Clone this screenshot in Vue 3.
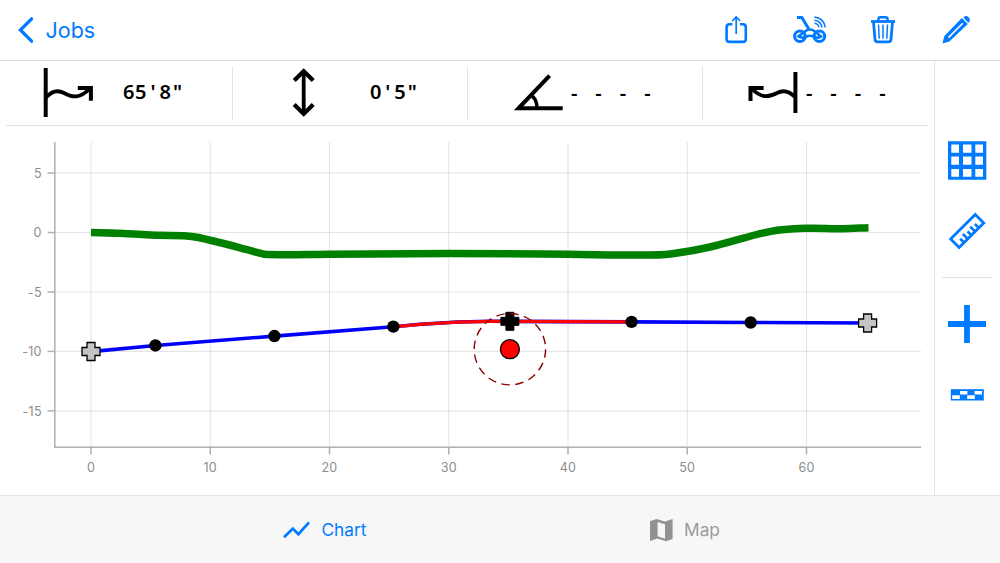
<script setup>
import { computed } from 'vue';

const xTicks = [0, 10, 20, 30, 40, 50, 60];
const yTicks = [5, 0, -5, -10, -15];

// feet to chart pixels
const sx = (v) => 91 + v * 11.925;
const sy = (v) => 106.5 - v * 11.89;

const ground = [
  [0, 0], [2.4, -0.06], [5.8, -0.24], [7.8, -0.27], [9, -0.42], [12.2, -1.2], [14, -1.7], [14.8, -1.86],
  [20, -1.83], [30, -1.76], [40, -1.83], [46, -1.9], [48.6, -1.8], [52, -1.2], [57, 0.1], [60, 0.36],
  [63, 0.32], [65.2, 0.4]
];

const rods = [
  { x: 5.4, y: -9.5 },
  { x: 15.38, y: -8.71 },
  { x: 25.35, y: -7.92 },
  { x: 45.33, y: -7.52 },
  { x: 55.32, y: -7.57 }
];

// smooth line through the survey points
const groundPath = computed(() => {
  const p = ground.map(([x, y]) => [sx(x), sy(y)]);
  let d = `M${p[0][0]} ${p[0][1]}`;
  for (let i = 0; i < p.length - 1; i++) {
    const a = p[i - 1] || p[i];
    const b = p[i];
    const c = p[i + 1];
    const e = p[i + 2] || c;
    const step = (c[0] - b[0]) / 3;
    const m1 = (c[1] - a[1]) / (c[0] - a[0]);
    const m2 = (e[1] - b[1]) / (e[0] - b[0]);
    d += ` C${b[0] + step} ${b[1] + m1 * step} ${c[0] - step} ${c[1] - m2 * step} ${c[0]} ${c[1]}`;
  }
  return d;
});

const cross = 'M-4 -9H4V-4H9V4H4V9H-4V4H-9V-4H-4Z';
</script>

<template>
  <div class="app">
    <header class="header">
      <div class="back">
        <svg width="18" height="28" viewBox="0 0 18 28">
          <path d="M14.6 2.8L3.4 14L14.6 25.2" fill="none" stroke="#007aff" stroke-width="3.3" stroke-linecap="round" stroke-linejoin="miter" />
        </svg>
        <span>Jobs</span>
      </div>
      <div class="actions">
        <!-- share -->
        <svg width="36" height="34" viewBox="718 13 36 34" class="line">
          <path d="M732.4 24.3H729.5Q726.6 24.3 726.6 27.2V39Q726.6 41.9 729.5 41.9H742.9Q745.8 41.9 745.8 39V27.2Q745.8 24.3 742.9 24.3H740" stroke-width="2.6" />
          <path d="M736.2 34V17.5M732.2 21L736.2 17L740.2 21" stroke-width="1.7" />
        </svg>
        <!-- locator -->
        <svg width="40" height="34" viewBox="790 13 40 34" class="line">
          <path d="M797 17.4H801.8L808.8 29" stroke-width="3" />
          <circle cx="799.9" cy="36.3" r="5.3" stroke-width="3" />
          <circle cx="819.4" cy="36.3" r="5.3" stroke-width="3" />
          <path d="M798.5 36.4Q803 33 805.6 31Q807.5 29.5 810 29.5Q812.7 29.5 814.5 31.3L821 36.4Q818 38.7 814 36.8Q810 34.8 806 36.8Q802 38.7 798.5 36.4Z" stroke-width="2.6" />
          <path d="M814.4 17.1A11 11 0 0 1 825.1 27.4M814.4 20.2A8 8 0 0 1 822 27.4M814.4 23.2A5 5 0 0 1 818.9 27.4" stroke-width="1.6" />
        </svg>
        <!-- delete -->
        <svg width="36" height="34" viewBox="866 13 36 34" class="line">
          <path d="M871 21.5H895" stroke-width="2.8" />
          <path d="M878.4 21V19.2Q878.4 17.3 880.4 17.3H885.6Q887.6 17.3 887.6 19.2V21" stroke-width="2.4" />
          <path d="M873.5 22L875 39.4Q875.2 41.9 877.6 41.9H888.4Q890.8 41.9 891 39.4L892.5 22" stroke-width="2.8" />
          <path d="M878.5 24.5L879.2 38.7M883 24.5V38.7M887.5 24.5L886.8 38.7" stroke-width="1.5" />
        </svg>
        <!-- edit -->
        <svg width="36" height="34" viewBox="938 13 36 34">
          <path d="M961.8 18.1L967.8 24.1L949.4 41.4L942.4 43.4L944.4 35.9Z" fill="#007aff" />
          <path d="M948.4 37.6L962.8 23.3" stroke="#fff" stroke-width="1.5" />
          <path d="M963.4 17.6L964.6 16.6Q966.5 15.2 968.6 17.2Q970.8 19.3 969.6 21.3L968.3 22.7Z" fill="#007aff" />
        </svg>
      </div>
    </header>

    <div class="main">
      <div class="content">
        <div class="readouts">
          <div class="readout">
            <svg class="glyph" width="56" height="58" viewBox="40 64 56 58">
              <path d="M45.7 68V117" stroke-width="4" />
              <path d="M46 97.5C53 89.5 59 90.3 64 93C73 98 80 98.5 90 88.5" stroke-width="3.8" />
              <path d="M77.8 87.9H90.9V100.8" stroke-width="4" />
            </svg>
            <div class="value first"><span v-for="(c, i) in '65\'8&quot;'" :key="i">{{ c }}</span></div>
          </div>
          <div class="readout">
            <svg class="glyph updown" width="40" height="58" viewBox="284 64 40 58">
              <path d="M303.7 71V114" stroke-width="3.8" />
              <path d="M294.2 80.6L303.7 71.3L313.2 80.6M294.2 104.4L303.7 113.9L313.2 104.4" stroke-width="4.2" />
            </svg>
            <div class="value second"><span v-for="(c, i) in '0\'5&quot;'" :key="i">{{ c }}</span></div>
          </div>
          <div class="readout">
            <svg class="glyph angle" width="52" height="58" viewBox="512 64 52 58">
              <path d="M549.6 75.6L518.5 108.3H562.7" stroke-width="4" />
              <path d="M530.5 95C535 97.5 537 102 537 108" stroke-width="3.6" />
            </svg>
            <div class="value dashes"><span v-for="(c, i) in '- - - -'" :key="i">{{ c }}</span></div>
          </div>
          <div class="readout">
            <svg class="glyph reverse" width="54" height="58" viewBox="746 64 54 58">
              <path d="M795.4 72V113" stroke-width="4" />
              <path d="M795 97C788 90 782 90.2 777 93C768 97.7 761 97.8 752 89" stroke-width="3.8" />
              <path d="M763.6 87.9H750.5V101" stroke-width="4" />
            </svg>
            <div class="value dashes last"><span v-for="(c, i) in '- - - -'" :key="i">{{ c }}</span></div>
          </div>
        </div>

        <svg class="chart" width="934" height="369" viewBox="0 0 934 369">
          <g stroke="#000" stroke-opacity="0.1" stroke-width="1.1">
            <line v-for="t in xTicks" :key="'gx' + t" :x1="sx(t)" :x2="sx(t)" y1="16" y2="321" />
            <line v-for="t in yTicks" :key="'gy' + t" x1="55" x2="921" :y1="sy(t)" :y2="sy(t)" />
          </g>
          <g stroke="#b0b0b0" stroke-width="1.5">
            <path d="M54.8 16V321.3H921" fill="none" />
            <line v-for="t in xTicks" :key="'tx' + t" :x1="sx(t)" :x2="sx(t)" y1="322" y2="328.5" />
            <line v-for="t in yTicks" :key="'ty' + t" x1="47.5" x2="54" :y1="sy(t)" :y2="sy(t)" />
          </g>
          <g class="ticks">
            <text v-for="t in xTicks" :key="'lx' + t" :x="sx(t)" y="346.3" text-anchor="middle">{{ t }}</text>
            <text v-for="t in yTicks" :key="'ly' + t" x="41.8" :y="sy(t) + 4.8" text-anchor="end">{{ t }}</text>
          </g>

          <path :d="groundPath" fill="none" stroke="#008000" stroke-width="7.5" />

          <path d="M91 225.6L155.4 219.5L274.6 210.1L393.3 200.7C430 197.2 455 195.4 490 195.3L631.5 195.9L751 196.5L867.5 197" fill="none" stroke="#00f" stroke-width="3.6" />
          <path d="M393.3 200.7C430 197.2 455 195.4 490 195.3L631.5 195.9" fill="none" stroke="#f00" stroke-width="3.2" />
          <circle v-for="r in rods" :key="r.x" :cx="sx(r.x)" :cy="sy(r.y)" r="6.2" />
          <g fill="#c4c4c4" stroke="#000" stroke-width="1.3">
            <path :d="cross" transform="translate(91 225.5)" />
            <path :d="cross" transform="translate(867.6 197)" />
          </g>
          <path :d="cross" transform="translate(509.9 195.3)" stroke="#000" />
          <circle cx="509.9" cy="223.2" r="35.7" fill="none" stroke="#8b0000" stroke-width="1.4" stroke-dasharray="8.5 5.52" />
          <circle cx="509.9" cy="223.2" r="9.5" fill="#f00" stroke="#000" stroke-width="1.3" />
        </svg>
      </div>

      <aside class="sidebar">
        <div class="tools top">
          <svg width="40" height="40" viewBox="947 141 40 40">
            <path fill="#007aff" fill-rule="evenodd" d="M948 141.3H986.3V179.7H948ZM951.3 144.5V152.7H959V144.5ZM963 144.5V152.7H971.5V144.5ZM975.3 144.5V152.7H983V144.5ZM951.3 156.6V164.8H959V156.6ZM963 156.6V164.8H971.5V156.6ZM975.3 156.6V164.8H983V156.6ZM951.3 169V176.8H959V169ZM963 169V176.8H971.5V169ZM975.3 169V176.8H983V169Z" />
          </svg>
          <svg width="40" height="40" viewBox="-20 -20 40 40" class="line">
            <g transform="translate(.2 0) rotate(-45)" stroke-width="2.8">
              <rect x="-17.4" y="-6" width="34.8" height="12" />
              <path d="M-10.4 6V.5M-5.2 6V-1M0 6V.5M5.2 6V-1M10.4 6V.5" stroke-width="2.7" />
            </g>
          </svg>
        </div>
        <div class="tools bottom">
          <svg width="40" height="40" viewBox="0 0 40 40">
            <path d="M20 1V39M1 20H39" stroke="#007aff" stroke-width="5.8" />
          </svg>
          <svg width="40" height="40" viewBox="947 374 40 40">
            <rect x="950.8" y="389.2" width="33" height="11.3" fill="#007aff" />
            <path d="M960 391H967.4V394.5H960ZM974.6 391H982V394.5H974.6ZM952.2 395.3H959.8V398.9H952.2ZM967.2 395.3H974.8V398.9H967.2Z" fill="#fff" />
          </svg>
        </div>
      </aside>
    </div>

    <nav class="tabs">
      <div class="tab active">
        <svg width="28" height="22" viewBox="283 519 28 22" class="line">
          <path d="M284 537.3L292.8 528.6L298.4 534.2L309 522.4" stroke-width="2.7" />
        </svg>
        <span>Chart</span>
      </div>
      <div class="tab">
        <svg width="24" height="24" viewBox="0 0 24 24">
          <path fill="#929292" fill-rule="evenodd" d="M1 3.2L7.4 1L16 3.6L23.6 1V21L17 23.3L8.2 20.6L1 23.1ZM8.6 3.9V18.3L16 20.8V6.2Z" />
        </svg>
        <span>Map</span>
      </div>
    </nav>
  </div>
</template>

<style>
body {
  margin: 0;
  overflow: hidden;
}
</style>

<style scoped>
.app {
  width: 1000px;
  height: 563px;
  display: flex;
  flex-direction: column;
  background: #fff;
  font-family: Inter, "Liberation Sans", sans-serif;
}

svg {
  display: block;
  flex: none;
}

.line {
  fill: none;
  stroke: #007aff;
}

.header {
  box-sizing: border-box;
  height: 61px;
  display: flex;
  justify-content: space-between;
  align-items: center;
  padding: 0 26px 0 17px;
  border-bottom: 1px solid #dcdcdc;
}

.back {
  display: flex;
  align-items: center;
  gap: 10.5px;
  color: #007aff;
  font-size: 21.5px;
}

.actions {
  display: flex;
  align-items: center;
  gap: 36px;
}

.main {
  display: flex;
  height: 434px;
}

.content {
  width: 934px;
}

.readouts {
  box-sizing: border-box;
  height: 65px;
  margin: 0 6px;
  display: flex;
  align-items: center;
  border-bottom: 1px solid #e2e2e2;
}

.readout {
  box-sizing: border-box;
  width: 235px;
  height: 54px;
  display: flex;
  align-items: center;
  border-right: 1px solid #e4e4e4;
}

.readout:first-child {
  width: 227px;
}

.readout:last-child {
  width: 225px;
  border-right: none;
}

.glyph {
  fill: none;
  stroke: #000;
  margin-left: 34px;
}

.updown {
  margin-left: 51px;
}

.angle {
  margin-left: 44px;
}

.reverse {
  margin-left: 43px;
}

.value {
  display: flex;
  white-space: pre;
  padding-bottom: 2px;
  font: 600 20px/28px "Noto Sans", "Open Sans", sans-serif;
}

.value span {
  width: 12.23px;
  text-align: center;
}

.first {
  margin-left: 26.5px;
}

.second {
  margin-left: 45.5px;
}

.dashes {
  margin-left: 4px;
  padding-bottom: 0;
}

.last {
  margin-left: 3px;
}

.ticks {
  font-size: 12.5px;
  letter-spacing: 0.3px;
  fill: #8c8c8c;
}

.sidebar {
  box-sizing: border-box;
  width: 66px;
  padding: 0 8px 0 7px;
  border-left: 1px solid #e2e2e2;
}

.tools {
  display: flex;
  flex-direction: column;
  align-items: center;
  gap: 30px;
}

.top {
  box-sizing: border-box;
  height: 217px;
  padding-top: 80px;
  border-bottom: 1px solid #e2e2e2;
}

.bottom {
  padding-top: 26px;
}

.tabs {
  box-sizing: border-box;
  height: 68px;
  display: flex;
  align-items: center;
  padding: 0 135.5px 0 144.5px;
  border-top: 1.5px solid #e4e4e4;
  background: #f7f7f7;
}

.tab {
  flex: 1;
  display: flex;
  justify-content: center;
  align-items: center;
  gap: 11px;
  font-size: 17.3px;
  color: #9b9b9b;
}

.active {
  color: #007aff;
}
</style>
